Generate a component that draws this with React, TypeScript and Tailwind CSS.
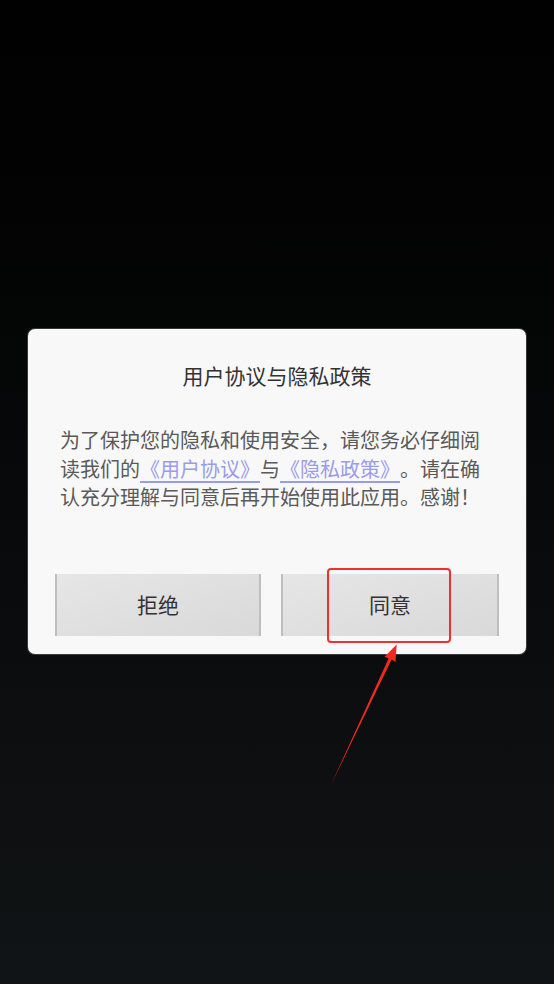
import React from "react";

const font = { fontFamily: '"Noto Sans CJK SC", "Noto Sans", sans-serif' };

export default function App() {
  return (
    <div
      className="relative w-[554px] h-[984px] overflow-hidden bg-gradient-to-b from-[#010101] via-[#08090a] to-[#111416] pt-[329px] px-[28px]"
      style={font}
    >
      <div className="relative w-[498px] h-[325px] rounded-[7px] bg-[#f8f8f8] shadow-[0_0_0_1px_rgba(150,150,150,0.35)] flex flex-col [text-spacing-trim:space-all]">
        <div className="pt-[32px] h-[60px] text-center text-[21px] leading-[28px] text-[#333333]">
          用户协议与隐私政策
        </div>
        <div className="mt-[37px] px-[32px] text-[20px] leading-[28.5px] text-[#5a5a5a] [text-spacing-trim:space-all] [font-feature-settings:'halt'_0,'chws'_0]">
          为了保护您的隐私和使用安全，请您务必仔细阅读我们的
          <span className="text-[#9b9beb] underline decoration-[#9b9beb] underline-offset-[4px]">
            《用户协议》
          </span>
          与
          <span className="text-[#9b9beb] underline decoration-[#9b9beb] underline-offset-[4px]">
            《隐私政策》
          </span>
          。请在确认充分理解与同意后再开始使用此应用。感谢！
        </div>
        <div className="mt-auto mb-[18px] px-[27px] flex gap-[20px]">
          <div className="w-[206px] h-[62px] border-x-2 border-[#bebebe] bg-gradient-to-br from-[#e6e6e6] to-[#d9d9d9] flex items-center justify-center text-[21px] text-[#333333]">
            拒绝
          </div>
          <div className="w-[218px] h-[62px] border-x-2 border-[#bebebe] bg-gradient-to-br from-[#e6e6e6] to-[#d9d9d9] flex items-center justify-center text-[21px] text-[#333333]">
            同意
          </div>
        </div>
        <div className="absolute left-[299px] top-[239px] w-[124px] h-[75px] rounded-[4px] border-[2.5px] border-[#f0302a]" />
      </div>
      <svg
        className="absolute left-0 top-0"
        width="554"
        height="984"
        viewBox="0 0 554 984"
      >
        <polygon
          points="330,787 388.6,658.4 384.5,656.8 396.7,644.5 395.5,662 391.6,659.6"
          fill="#f02a1f"
        />
      </svg>
    </div>
  );
}
